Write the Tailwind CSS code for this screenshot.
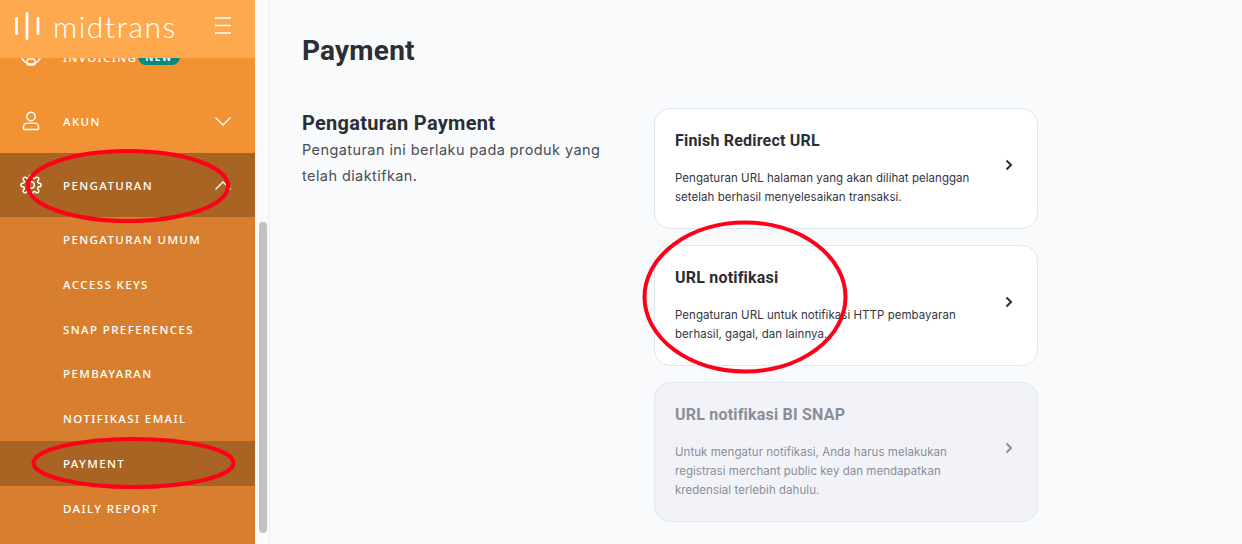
<!DOCTYPE html>
<html>
<head>
<meta charset="utf-8">
<script src="https://cdn.jsdelivr.net/npm/@tailwindcss/browser@4"></script>
</head>
<body class="m-0 overflow-hidden bg-[#f9fafc] font-['Inter','Liberation_Sans',sans-serif]">
<div class="relative flex h-[544px] w-[1242px] overflow-hidden">
  <!-- Sidebar -->
  <aside class="relative h-[544px] w-[255px] shrink-0 overflow-hidden bg-[#d77f2e] font-['Noto_Sans','Open_Sans',sans-serif] text-[11.5px] font-medium tracking-[1.4px] text-white">
    <header class="absolute inset-x-0 top-0 z-10 flex h-[58px] items-center justify-between bg-[#ffa94f] pb-[7px] pl-[15px] pr-[24px]">
      <div class="flex items-center gap-[12px]">
        <svg width="26" height="28" viewBox="0 0 26 28" fill="none" stroke="white" stroke-width="2.800" stroke-linecap="round"><path d="M1.500 6.500v15M12 1.500v25M23 6.500v15"/></svg>
        <span class="font-['Lato','Noto_Sans',sans-serif] text-[30px] leading-none font-light tracking-[1.500px]">midtrans</span>
      </div>
      <svg width="16" height="17" viewBox="0 0 16 17" stroke="white" stroke-width="1.300" fill="none"><path d="M0 1h16M0 8.500h16M0 16h16"/></svg>
    </header>
    <nav class="flex flex-col pt-[25px]">
      <a class="flex h-[64px] items-center bg-[#f19235] pl-[20px] pr-[24px]">
        <svg class="mr-[21px] shrink-0" width="22" height="22" viewBox="0 0 22 22" fill="none" stroke="white" stroke-width="1.500"><circle cx="11" cy="8" r="10"/><rect x="7" y="13" width="8" height="6" rx="2"/></svg>
        <span class="w-[75px] shrink-0 whitespace-nowrap pt-[1px]">INVOICING</span>
        <span class="flex h-[16px] w-[42px] items-center justify-center rounded-full bg-[#0a8a78] text-[10px] font-bold">NEW</span>
      </a>
      <a class="flex h-[64px] items-center justify-between bg-[#f19235] pl-[21px] pr-[24px]">
        <span class="flex items-center">
          <svg class="mr-[22px] shrink-0" width="20" height="20" viewBox="0 0 20 20" fill="none" stroke="white" stroke-width="1.400"><circle cx="10" cy="5.500" r="4.200"/><path d="M3.200 18.500h13.600a.7.7 0 0 0 .7-.7v-2.100a3.600 3.600 0 0 0-3.600-3.600H6.100a3.600 3.600 0 0 0-3.600 3.600v2.100a.7.7 0 0 0 .7.7z"/></svg>
          <span class="pt-[2px]">AKUN</span>
        </span>
        <svg width="16" height="9" viewBox="0 0 16 9" fill="none" stroke="white" stroke-width="1.300"><path d="M.5.5 8 8 15.500.5"/></svg>
      </a>
      <a class="flex h-[64px] items-center justify-between bg-[#a96423] pl-[20px] pr-[24px]">
        <span class="flex items-center">
          <svg class="mr-[21px] shrink-0" width="22" height="22" viewBox="0 0 24 24" fill="none" stroke="white" stroke-width="1.600" stroke-linejoin="round"><circle cx="12" cy="12" r="3.600"/><path d="M19.400 15a1.700 1.700 0 0 0 .3 1.800l.1.100a2 2 0 1 1-2.800 2.800l-.1-.1a1.700 1.700 0 0 0-2.900 1.200V21a2 2 0 1 1-4 0v-.1a1.700 1.700 0 0 0-2.900-1.200l-.1.100a2 2 0 1 1-2.800-2.800l.1-.1a1.700 1.700 0 0 0-1.200-2.900H3a2 2 0 1 1 0-4h.1a1.700 1.700 0 0 0 1.200-2.900l-.1-.1A2 2 0 1 1 7 4.200l.1.100a1.700 1.700 0 0 0 2.900-1.200V3a2 2 0 1 1 4 0v.1a1.700 1.700 0 0 0 2.900 1.200l.1-.1a2 2 0 1 1 2.800 2.800l-.1.100a1.700 1.700 0 0 0 1.200 2.900h.1a2 2 0 1 1 0 4h-.1a1.700 1.700 0 0 0-1.500 1z"/></svg>
          <span class="pt-[2px]">PENGATURAN</span>
        </span>
        <svg width="16" height="9" viewBox="0 0 16 9" fill="none" stroke="white" stroke-width="1.300"><path d="M.5 8.500 8 1l7.500 7.500"/></svg>
      </a>
      <a class="flex h-[45px] items-center pl-[63px] pt-[1px]">PENGATURAN UMUM</a>
      <a class="flex h-[45px] items-center pl-[63px] pt-[1px]">ACCESS KEYS</a>
      <a class="flex h-[44px] items-center pl-[63px] pt-[1px]">SNAP PREFERENCES</a>
      <a class="flex h-[45px] items-center pl-[63px] pt-[1px]">PEMBAYARAN</a>
      <a class="flex h-[45px] items-center pl-[63px] pt-[1px]">NOTIFIKASI EMAIL</a>
      <a class="flex h-[45px] items-center bg-[#a96423] pl-[63px] pt-[1px]">PAYMENT</a>
      <a class="flex h-[45px] items-center pl-[63px] pt-[1px]">DAILY REPORT</a>
    </nav>
  </aside>
  <!-- Scrollbar -->
  <div class="h-[544px] w-[15px] shrink-0 border-r border-[#eceef1] bg-[#fafafa] pl-[4px] pt-[222px]">
    <div class="h-[311px] w-[8px] rounded-full bg-[#c2c2c2]"></div>
  </div>
  <!-- Main -->
  <main class="min-w-0 flex-1 bg-[#f9fafc] pl-[32px]">
    <h1 class="pt-[33px] text-[28px] leading-[36px] font-bold tracking-[0.2px] text-[#2b2e35] font-['Roboto','Inter',sans-serif]">Payment</h1>
    <div class="mt-[39px] flex">
      <section class="w-[352px] shrink-0">
        <h2 class="pt-[2px] text-[20px] leading-[26px] font-bold tracking-[0.28px] text-[#2b2e35] font-['Roboto','Inter',sans-serif]">Pengaturan Payment</h2>
        <p class="pt-[1px] text-[14.5px] leading-[26px] tracking-[0.42px] text-[#4a4d57]">Pengaturan ini berlaku pada produk yang<br>telah diaktifkan.</p>
      </section>
      <section class="flex w-[384px] shrink-0 flex-col gap-[16px]">
        <a class="flex h-[121px] items-center justify-between rounded-[16px] border border-[#dfe7f1] bg-white pl-[20px] pr-[24px]">
          <div class="pb-[1px]">
            <h3 class="text-[16px] leading-[22px] font-bold tracking-[0.2px] text-[#2b2e35] font-['Roboto','Inter',sans-serif]">Finish Redirect URL</h3>
            <p class="mt-[17px] text-[11.5px] leading-[19px] tracking-[0.04px] text-[#33363e]">Pengaturan URL halaman yang akan dilihat pelanggan<br>setelah berhasil menyelesaikan transaksi.</p>
          </div>
          <svg class="mb-[8px]" width="8" height="12" viewBox="0 0 8 12" fill="none" stroke="#2b2e35" stroke-width="2"><path d="M1.500 1.500 6 6l-4.500 4.500"/></svg>
        </a>
        <a class="flex h-[121px] items-center justify-between rounded-[16px] border border-[#dfe7f1] bg-white pl-[20px] pr-[24px]">
          <div class="pb-[1px]">
            <h3 class="text-[16px] leading-[22px] font-bold tracking-[0.2px] text-[#2b2e35] font-['Roboto','Inter',sans-serif]">URL notifikasi</h3>
            <p class="mt-[17px] text-[11.5px] leading-[19px] tracking-[0.04px] text-[#33363e]">Pengaturan URL untuk notifikasi HTTP pembayaran<br>berhasil, gagal, dan lainnya.</p>
          </div>
          <svg class="mb-[8px]" width="8" height="12" viewBox="0 0 8 12" fill="none" stroke="#2b2e35" stroke-width="2"><path d="M1.500 1.500 6 6l-4.500 4.500"/></svg>
        </a>
        <a class="flex h-[140px] items-center justify-between rounded-[16px] border border-[#dfe7f1] bg-[#f2f3f8] pl-[20px] pr-[24px]">
          <div class="pb-[1px]">
            <h3 class="text-[16px] leading-[22px] font-bold tracking-[0.2px] text-[#8b8e99] font-['Roboto','Inter',sans-serif]">URL notifikasi BI SNAP</h3>
            <p class="mt-[17px] text-[11.5px] leading-[19px] tracking-[0.04px] text-[#8b8e99]">Untuk mengatur notifikasi, Anda harus melakukan<br>registrasi merchant public key dan mendapatkan<br>kredensial terlebih dahulu.</p>
          </div>
          <svg class="mb-[8px]" width="8" height="12" viewBox="0 0 8 12" fill="none" stroke="#8b8e99" stroke-width="2"><path d="M1.500 1.500 6 6l-4.500 4.500"/></svg>
        </a>
      </section>
    </div>
  </main>
  <!-- Red hand-drawn annotations -->
  <svg class="pointer-events-none absolute inset-0 z-20" width="1242" height="544" viewBox="0 0 1242 544" fill="none" stroke="#ff0018" stroke-width="4">
    <ellipse cx="128" cy="186" rx="100" ry="35"/>
    <ellipse cx="133.500" cy="463" rx="100" ry="24"/>
    <ellipse cx="745" cy="297" rx="100.500" ry="74.500"/>
  </svg>
</div>
</body>
</html>
